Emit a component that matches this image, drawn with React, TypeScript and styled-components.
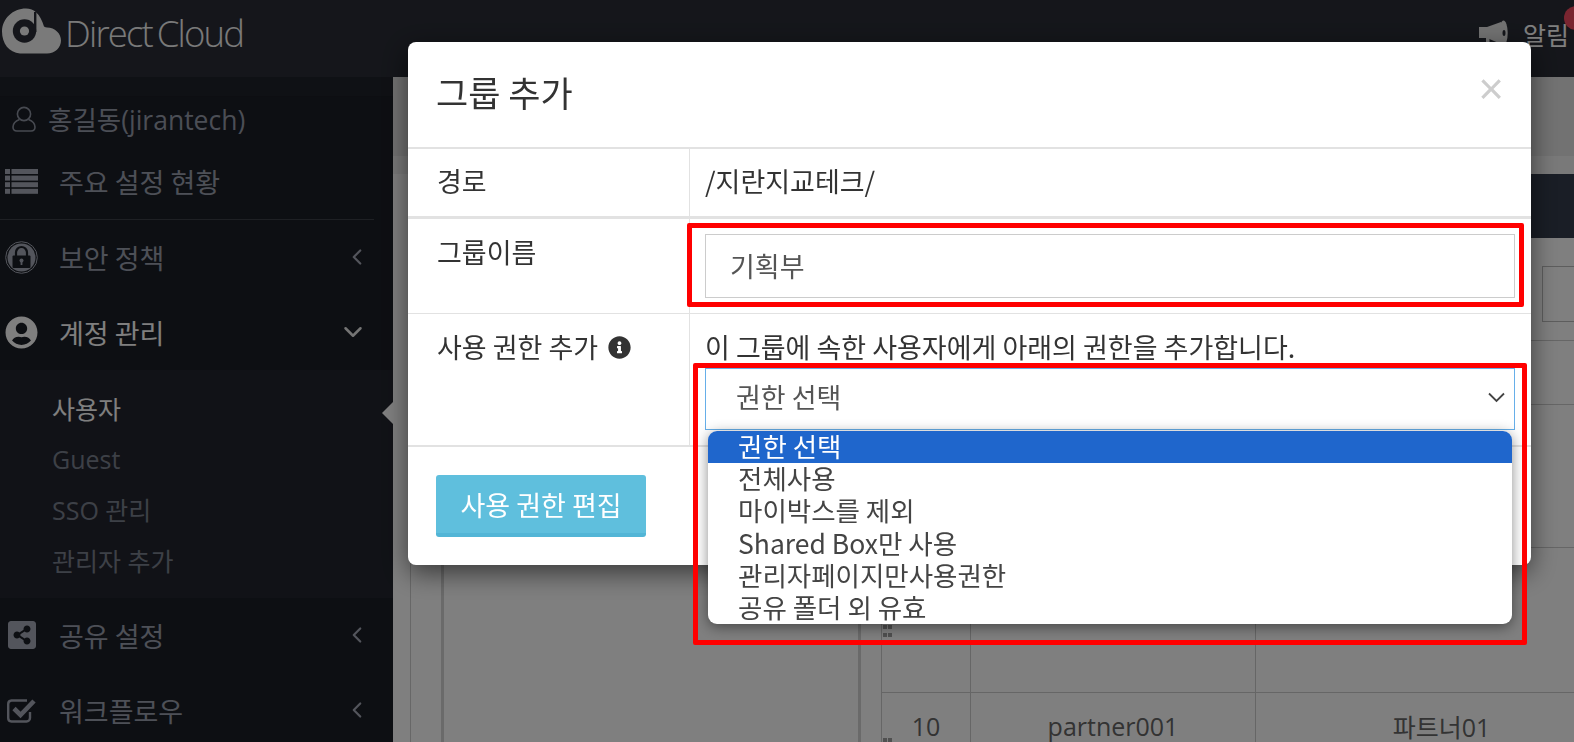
import React from 'react';
import styled, { createGlobalStyle } from 'styled-components';
import { FaInfoCircle, FaShareAltSquare, FaUserCircle } from 'react-icons/fa';
import { FiChevronDown, FiChevronLeft } from 'react-icons/fi';

const GlobalStyle = createGlobalStyle`
  html, body {
    margin: 0;
    padding: 0;
    height: 100%;
    overflow: hidden;
    background: #fff;
  }
  * {
    box-sizing: border-box;
  }
  body {
    font-family: "Open Sans", "Noto Sans CJK KR", sans-serif;
    font-size: 25px;
    color: #333;
  }
`;

const Page = styled.div`
  display: flex;
  flex-direction: column;
  width: 100vw;
  height: 100vh;
  overflow: hidden;
`;

const TopBar = styled.header`
  flex: 0 0 77px;
  display: flex;
  align-items: center;
  justify-content: space-between;
  padding-left: 1px;
  background: #2a2d36;
  color: #fff;
`;

const Brand = styled.div`
  display: flex;
  align-items: center;
  gap: 4px;
  margin-top: -16px;
`;

const BrandName = styled.span`
  margin-top: 5px;
  font-family: "Open Sans", sans-serif;
  font-weight: 300;
  font-size: 36.5px;
  letter-spacing: -1.8px;
  word-spacing: -3px;
  color: #f4f4f4;
`;

const Alarm = styled.div`
  position: relative;
  display: flex;
  align-items: center;
  gap: 15px;
  margin-top: -10px;
  padding-right: 5px;
  color: #fff;
  font-family: "Noto Sans CJK KR", sans-serif;
`;

const AlarmBadge = styled.span`
  position: absolute;
  top: -10px;
  right: -14px;
  width: 24px;
  height: 24px;
  border-radius: 50%;
  background: #f44a60;
`;

const Body = styled.div`
  flex: 1;
  display: flex;
  min-height: 0;
`;

const Sidebar = styled.nav`
  flex: 0 0 393px;
  display: flex;
  flex-direction: column;
  background: #1b1e26;
  font-family: "Noto Sans CJK KR", sans-serif;
  font-size: 27px;
`;

const SidebarTop = styled.div`
  flex: 0 0 20px;
  background: #1f222a;
  border-bottom: 1px solid #1a1d24;
`;

const UserRow = styled.div`
  flex: 0 0 48px;
  display: flex;
  align-items: center;
  gap: 12px;
  padding: 0 0 5px 12px;
  color: #969cab;
  font-family: "Open Sans", "Noto Sans CJK KR", sans-serif;
  font-size: 26.5px;
`;

const MenuItem = styled.div<{ $active?: boolean; $divided?: boolean }>`
  flex: 0 0 75px;
  display: flex;
  align-items: center;
  margin-right: ${(p) => (p.$divided ? '19px' : '0')};
  padding-left: 5px;
  padding-right: ${(p) => (p.$divided ? '4px' : '23px')};
  padding-bottom: 1px;
  color: ${(p) => (p.$active ? '#fff' : '#9aa0ae')};
  border-bottom: ${(p) => (p.$divided ? '1px solid #3d4049' : 'none')};
`;

const MenuIcon = styled.span<{ $active?: boolean }>`
  flex: 0 0 33px;
  display: flex;
  align-items: center;
  justify-content: center;
  margin-right: 21px;
  color: ${(p) => (p.$active ? '#fff' : '#a6abb8')};

  svg {
    display: block;
  }
`;

const MenuArrow = styled.span<{ $open?: boolean }>`
  display: flex;
  margin-left: auto;
  margin-right: ${(p) => (p.$open ? '2px' : '0')};
  color: ${(p) => (p.$open ? '#e8e8e8' : '#a6abb8')};
`;

const SubMenu = styled.ul`
  flex: 0 0 228px;
  margin: 0;
  padding: 13px 0;
  list-style: none;
  background: #22252e;
  font-size: 25px;
`;

const SubItem = styled.li<{ $active?: boolean }>`
  position: relative;
  display: flex;
  align-items: center;
  height: 50.5px;
  padding-left: 52px;
  color: ${(p) => (p.$active ? '#fff' : '#7b818e')};
  font-family: "Open Sans", "Noto Sans CJK KR", sans-serif;
`;

const SubPointer = styled.span`
  position: absolute;
  top: 19px;
  right: 0;
  width: 0;
  height: 0;
  border-top: 11px solid transparent;
  border-bottom: 11px solid transparent;
  border-right: 11px solid #fff;
`;

const Main = styled.main`
  flex: 1;
  min-width: 0;
  display: flex;
  flex-direction: column;
  background: #fff;
`;

const TitleStrip = styled.div`
  flex: 0 0 79px;
  background: #e4e4e4;
`;

const InfoStrip = styled.div`
  flex: 0 0 18px;
  background: #f2f2f2;
`;

const ListHead = styled.div`
  flex: 0 0 64px;
  margin-left: 467px;
  background: #343c4c;
`;

const Content = styled.div`
  flex: 1;
  display: flex;
  padding-left: 17px;
`;

const TreeFrame = styled.div`
  flex: 0 0 451px;
  padding-left: 30px;
  border-left: 1px solid #cfcfcf;
`;

const TreePanel = styled.div`
  height: 100%;
  border-left: 3px solid #d4d4d4;
  border-right: 3px solid #d4d4d4;
`;

const TablePanel = styled.div`
  flex: 1;
  min-width: 0;
  padding-left: 20px;
`;

const SearchArea = styled.div`
  height: 103px;
  padding: 28px 0 0 661px;
  border-bottom: 1px solid #ccc;
`;

const SearchBox = styled.div`
  width: 200px;
  height: 56px;
  border: 1px solid #bbb;
`;

const GridRow = styled.div<{ $height: number }>`
  position: relative;
  display: grid;
  grid-template-columns: 89px 285px 372px;
  height: ${(p) => p.$height}px;
  border-bottom: 1px solid #ccc;
  border-left: 1px solid #ccc;
`;

const GridCell = styled.div`
  display: flex;
  align-items: center;
  justify-content: center;
  border-right: 1px solid #ccc;
  color: #666;
`;

const DragDots = styled.span<{ $top: number; $height: number }>`
  position: absolute;
  top: ${(p) => p.$top}px;
  left: 1px;
  width: 9px;
  height: ${(p) => p.$height}px;
  background: repeating-linear-gradient(to right, #a0a0a0 0 4px, transparent 4px 5px);
  mask-image: repeating-linear-gradient(#000 0 4px, transparent 4px 8px);
`;

const Backdrop = styled.div`
  position: fixed;
  inset: 0;
  padding: 42px 43px 0 408px;
  background: rgba(0, 0, 0, 0.5);
`;

const Modal = styled.section`
  position: relative;
  border-radius: 8px;
  background: #fff;
  box-shadow: 0 8px 26px rgba(0, 0, 0, 0.55);
  font-family: "Noto Sans CJK KR", sans-serif;
  font-size: 27px;
`;

const ModalHeader = styled.div`
  height: 107px;
  display: flex;
  align-items: center;
  justify-content: space-between;
  padding: 0 27px 6px 28px;
  border-bottom: 2px solid #e2e2e2;
`;

const ModalTitle = styled.h4`
  margin: 0;
  font-size: 35px;
  font-weight: 400;
  color: #333;
`;

const CloseButton = styled.span`
  margin-top: -6px;
  font-family: "Liberation Sans", sans-serif;
  font-size: 44px;
  line-height: 1;
  color: #cdcdcd;
`;

const FormRow = styled.div<{ $height: number; $line: number }>`
  display: grid;
  grid-template-columns: 282px 1fr;
  height: ${(p) => p.$height}px;
  border-bottom: ${(p) => p.$line}px solid #e2e2e2;
`;

const LabelCell = styled.div<{ $center?: boolean }>`
  display: flex;
  align-items: ${(p) => (p.$center ? 'center' : 'flex-start')};
  gap: 10px;
  padding: ${(p) => (p.$center ? '0' : '15px')} 0 ${(p) => (p.$center ? '3px' : '0')} 29px;
  border-right: 1px solid #e2e2e2;
  line-height: 36px;
`;

const InfoIcon = styled(FaInfoCircle)`
  flex: none;
  width: 23px;
  height: 23px;
  margin-top: 7px;
  color: #333;
`;

const ValueCell = styled.div<{ $center?: boolean }>`
  position: relative;
  display: flex;
  flex-direction: column;
  justify-content: ${(p) => (p.$center ? 'center' : 'flex-start')};
  padding: ${(p) => (p.$center ? '0' : '15px')} 16px ${(p) => (p.$center ? '3px' : '0')} 15px;
  line-height: 36px;
`;

const TextValue = styled.span`
  padding-left: 0;
`;

const TextInput = styled.input`
  width: 100%;
  height: 64px;
  padding: 0 24px 2px;
  border: 1px solid #ccc;
  outline: none;
  font: inherit;
  color: #555;
`;

const SelectWrap = styled.div`
  position: relative;
  margin-top: 3px;
`;

const SelectBox = styled.div`
  height: 62px;
  display: flex;
  align-items: center;
  justify-content: space-between;
  padding: 0 9px 4px 30px;
  border: 1px solid #66afe9;
  color: #555;
`;

const OptionList = styled.ul`
  position: absolute;
  z-index: 2;
  top: 63px;
  left: 3px;
  width: 804px;
  margin: 0;
  padding: 0;
  list-style: none;
  border-radius: 9px;
  background: #fff;
  box-shadow: 0 3px 14px rgba(0, 0, 0, 0.45);
`;

const Option = styled.li<{ $selected?: boolean }>`
  height: 32.2px;
  padding-left: 30px;
  line-height: 29px;
  font-size: 26.5px;
  color: ${(p) => (p.$selected ? '#fff' : '#444')};
  background: ${(p) => (p.$selected ? '#1f66cc' : 'transparent')};

  &:first-child {
    border-radius: 9px 9px 0 0;
  }
`;

const ModalFooter = styled.div`
  padding: 28px 28px;
`;

const EditButton = styled.button`
  display: block;
  width: 210px;
  height: 62px;
  padding: 0;
  border: 0;
  border-bottom: 4px solid #52b5d6;
  border-radius: 3px;
  background: #5fbfdd;
  color: #fff;
  font: inherit;
`;

const Highlight = styled.div<{ $left: number; $top: number; $width: number; $height: number }>`
  position: absolute;
  z-index: 3;
  left: ${(p) => p.$left}px;
  top: ${(p) => p.$top}px;
  width: ${(p) => p.$width}px;
  height: ${(p) => p.$height}px;
  border: 5px solid #f00;
  border-radius: 2px;
  pointer-events: none;
`;

const CloudLogo = () => (
  <svg width="60" height="46" viewBox="0 7.5 60 46" aria-hidden="true">
    <path
      fill="#f4f4f4"
      d="M19 53C8 52 1 43 1 31 1 18 12 8 25 8c8 0 14 5 18 18 1 .6 2 1 3 1 8 0 14 6 14 13s-6 13-14 13z"
    />
    <circle cx="23.5" cy="30.5" r="11.7" fill="#2a2d36" />
    <rect x="33" y="11.5" width="2.4" height="20" fill="#2a2d36" />
    <circle cx="23.5" cy="30.5" r="4.6" fill="#f4f4f4" />
  </svg>
);

const Megaphone = () => (
  <svg width="29" height="27" viewBox="0 0 29 27" aria-hidden="true">
    <path fill="#e4e4e4" d="M0 7h8L22 2v22L8 18H0z" />
    <rect x="7" y="18" width="3.5" height="9" fill="#e4e4e4" />
    <ellipse cx="24.5" cy="13" rx="4.2" ry="12.5" fill="#e4e4e4" />
    <ellipse cx="25" cy="13" rx="1.5" ry="3" fill="#2a2d36" />
  </svg>
);

const UserOutline = () => (
  <svg width="24" height="26" viewBox="0 0 24 26" fill="none" stroke="#8f95a3" strokeWidth="1.6" aria-hidden="true">
    <circle cx="12" cy="8" r="6.6" />
    <path d="M7.5 13.5C3.5 15 1 18 1 21c0 3 2 4 4 4h14c2 0 4-1 4-4 0-3-2.5-6-6.5-7.5" />
  </svg>
);

const ListBars = () => (
  <svg width="33" height="25" viewBox="0 0 33 25" fill="currentColor" aria-hidden="true">
    {[0, 6.6, 13.2, 19.8].map((y) => (
      <g key={y}>
        <rect x="0" y={y} width="5" height="5" />
        <rect x="6.5" y={y} width="26.5" height="5" />
      </g>
    ))}
  </svg>
);

const LockBadge = () => (
  <svg width="33" height="33" viewBox="0 0 33 33" aria-hidden="true">
    <circle cx="16.5" cy="16.5" r="15.8" fill="none" stroke="#a6abb8" strokeWidth="1" />
    <circle cx="16.5" cy="16.5" r="14" fill="#a6abb8" />
    <path fill="none" stroke="#1b1e26" strokeWidth="2.2" d="M11 15v-3.5a5.5 5.5 0 0 1 11 0V15" />
    <rect x="7.5" y="14.5" width="18" height="12.5" rx="1" fill="#1b1e26" />
    <circle cx="16.5" cy="19.5" r="2" fill="#a6abb8" />
    <rect x="15.6" y="20" width="1.8" height="4" fill="#a6abb8" />
  </svg>
);

const CheckBox = () => (
  <svg width="29" height="25" viewBox="0 0 29 25" fill="none" stroke="currentColor" aria-hidden="true">
    <path strokeWidth="2.4" d="M23 14v6a3.5 3.5 0 0 1-3.5 3.5h-15A3.5 3.5 0 0 1 1.2 20V6a3.5 3.5 0 0 1 3.3-3.5H20" />
    <path strokeWidth="4.6" d="M7 10.5l6.5 6.5L27 3" />
  </svg>
);

const SelectChevron = () => (
  <svg width="17" height="11" viewBox="0 0 17 11" fill="none" stroke="#444" strokeWidth="1.8" aria-hidden="true">
    <path d="M1 1.5l7.5 7.5L16 1.5" />
  </svg>
);

const permissions = ['권한 선택', '전체사용', '마이박스를 제외', 'Shared Box만 사용', '관리자페이지만사용권한', '공유 폴더 외 유효'];
const subItems = ['사용자', 'Guest', 'SSO 관리', '관리자 추가'];

const App = () => {
  return (
    <Page>
      <GlobalStyle />
      <TopBar>
        <Brand>
          <CloudLogo />
          <BrandName>Direct Cloud</BrandName>
        </Brand>
        <Alarm>
          <Megaphone />
          <span>알림</span>
          <AlarmBadge />
        </Alarm>
      </TopBar>
      <Body>
        <Sidebar>
          <SidebarTop />
          <UserRow>
            <UserOutline />
            <span>홍길동(jirantech)</span>
          </UserRow>
          <MenuItem $divided>
            <MenuIcon><ListBars /></MenuIcon>
            주요 설정 현황
          </MenuItem>
          <MenuItem>
            <MenuIcon><LockBadge /></MenuIcon>
            보안 정책
            <MenuArrow><FiChevronLeft size={26} /></MenuArrow>
          </MenuItem>
          <MenuItem $active>
            <MenuIcon $active><FaUserCircle size={33} /></MenuIcon>
            계정 관리
            <MenuArrow $open><FiChevronDown size={30} /></MenuArrow>
          </MenuItem>
          <SubMenu>
            {subItems.map((item, i) => (
              <SubItem key={item} $active={i === 0}>
                {item}
                {i === 0 && <SubPointer />}
              </SubItem>
            ))}
          </SubMenu>
          <MenuItem>
            <MenuIcon><FaShareAltSquare size={32} /></MenuIcon>
            공유 설정
            <MenuArrow><FiChevronLeft size={26} /></MenuArrow>
          </MenuItem>
          <MenuItem>
            <MenuIcon><CheckBox /></MenuIcon>
            워크플로우
            <MenuArrow><FiChevronLeft size={26} /></MenuArrow>
          </MenuItem>
        </Sidebar>
        <Main>
          <TitleStrip />
          <InfoStrip />
          <ListHead />
          <Content>
            <TreeFrame>
              <TreePanel />
            </TreeFrame>
            <TablePanel>
              <SearchArea>
                <SearchBox />
              </SearchArea>
              <GridRow $height={64}>
                <GridCell />
                <GridCell />
                <GridCell />
              </GridRow>
              <GridRow $height={143}>
                <GridCell />
                <GridCell />
                <GridCell />
              </GridRow>
              <GridRow $height={145}>
                <DragDots $top={77} $height={24} />
                <GridCell />
                <GridCell />
                <GridCell />
              </GridRow>
              <GridRow $height={66}>
                <DragDots $top={45} $height={4} />
                <GridCell>10</GridCell>
                <GridCell>partner001</GridCell>
                <GridCell>파트너01</GridCell>
              </GridRow>
            </TablePanel>
          </Content>
        </Main>
      </Body>
      <Backdrop>
        <Modal>
          <ModalHeader>
            <ModalTitle>그룹 추가</ModalTitle>
            <CloseButton>×</CloseButton>
          </ModalHeader>
          <FormRow $height={70} $line={3}>
            <LabelCell $center>경로</LabelCell>
            <ValueCell $center>
              <TextValue>/지란지교테크/</TextValue>
            </ValueCell>
          </FormRow>
          <FormRow $height={95} $line={1}>
            <LabelCell>그룹이름</LabelCell>
            <ValueCell>
              <TextInput readOnly value="기획부" />
            </ValueCell>
          </FormRow>
          <FormRow $height={133} $line={2}>
            <LabelCell>
              사용 권한 추가
              <InfoIcon />
            </LabelCell>
            <ValueCell>
              <TextValue>이 그룹에 속한 사용자에게 아래의 권한을 추가합니다.</TextValue>
              <SelectWrap>
                <SelectBox>
                  권한 선택
                  <SelectChevron />
                </SelectBox>
                <OptionList>
                  {permissions.map((name, i) => (
                    <Option key={name} $selected={i === 0}>{name}</Option>
                  ))}
                </OptionList>
              </SelectWrap>
            </ValueCell>
          </FormRow>
          <ModalFooter>
            <EditButton>사용 권한 편집</EditButton>
          </ModalFooter>
          <Highlight $left={279} $top={181} $width={837} $height={84} />
          <Highlight $left={285} $top={321} $width={834} $height={282} />
        </Modal>
      </Backdrop>
    </Page>
  );
};

export default App;
